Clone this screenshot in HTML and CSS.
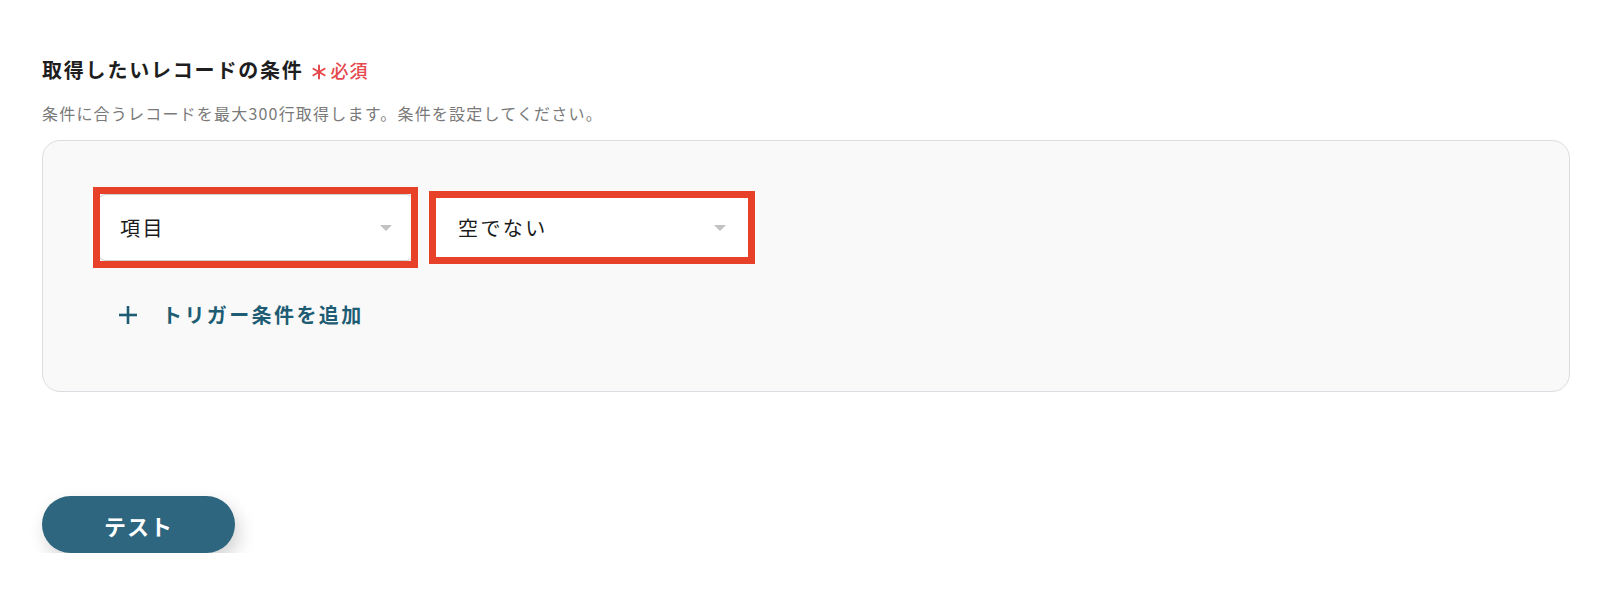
FILE: index.html
```html
<!DOCTYPE html>
<html lang="ja">
<head>
<meta charset="utf-8">
<title>条件</title>
<link rel="stylesheet" href="styles.css">
</head>
<body>
<div class="page">
  <div class="label-row">
    <span class="label">取得したいレコードの条件</span>
    <svg class="req-star" width="16" height="16" viewBox="0 0 16 16" aria-hidden="true">
      <g stroke="#e5484d" stroke-width="2" stroke-linecap="round">
        <line x1="8" y1="1.5" x2="8" y2="14.5"/>
        <line x1="2.4" y1="4.75" x2="13.6" y2="11.25"/>
        <line x1="2.4" y1="11.25" x2="13.6" y2="4.75"/>
      </g>
    </svg>
    <span class="req">必須</span>
  </div>
  <p class="hint">条件に合うレコードを最大300行取得します。条件を設定してください。</p>

  <div class="panel">
    <div class="cond-row">
      <div class="select hl hl-a">
        <span class="select-text">項目</span>
        <span class="caret"></span>
      </div>
      <div class="select select-focus hl hl-b">
        <span class="select-text">空でない</span>
        <span class="caret"></span>
      </div>
    </div>
    <div class="add-row">
      <svg class="plus" width="20" height="20" viewBox="0 0 20 20" aria-hidden="true">
        <g stroke="#1d5c73" stroke-width="2.6">
          <line x1="10" y1="1" x2="10" y2="19"/>
          <line x1="1" y1="10" x2="19" y2="10"/>
        </g>
      </svg>
      <span class="add-text">トリガー条件を追加</span>
    </div>
  </div>

  <button class="test-btn">テスト</button>
</div>
</body>
</html>
```

FILE: styles.css
```css
html, body {
  margin: 0;
  padding: 0;
  background: #ffffff;
}

body {
  font-family: "Noto Sans CJK JP", "Noto Sans", sans-serif;
  color: #222222;
}

.page {
  padding: 56px 30px 0 42px;
}

.label-row {
  display: flex;
  align-items: center;
  height: 28px;
}

.label {
  font-size: 20px;
  font-weight: 700;
  letter-spacing: 1.8px;
  line-height: 28px;
  color: #1e1e1e;
}

.req-star {
  margin-left: 7px;
  margin-top: 3px;
}

.req {
  margin-left: 4px;
  font-size: 18px;
  font-weight: 500;
  letter-spacing: 1px;
  color: #e5484d;
  line-height: 28px;
}

.hint {
  margin: 17px 0 15px;
  font-size: 16px;
  line-height: 24px;
  letter-spacing: 1.2px;
  color: #7a7a7a;
}

.panel {
  width: 1528px;
  box-sizing: border-box;
  border: 1px solid #dcdde2;
  border-radius: 18px;
  background: #f9f9f9;
  padding: 53px 0 61px 54px;
}

.cond-row {
  display: flex;
  gap: 17px;
}

.select {
  position: relative;
  box-sizing: border-box;
  width: 318px;
  height: 67px;
  background: #ffffff;
  border: 1px solid #cfcfcf;
  border-radius: 9px;
  display: flex;
  align-items: center;
  padding: 0 22px;
}

.select-focus {
  width: 320px;
  border: 2px solid #1d4ed8;
  padding-left: 24px;
  padding-right: 24px;
}

.select-text {
  flex: 1;
  font-size: 20px;
  letter-spacing: 2.4px;
  color: #1a1a1a;
  line-height: 28px;
}

.caret {
  width: 0;
  height: 0;
  border-left: 6px solid transparent;
  border-right: 6px solid transparent;
  border-top: 6px solid #c2c2c2;
}

/* red annotation frames lying over the selects */
.hl::after {
  content: "";
  position: absolute;
  border: 7.5px solid #e8412a;
  pointer-events: none;
}

.hl-a::after {
  top: -8px;
  left: -5px;
  right: -4px;
  bottom: -8px;
}

.hl-b::after {
  top: -5px;
  left: -5px;
  right: -5px;
  bottom: -5px;
}

.add-row {
  display: flex;
  align-items: center;
  gap: 24px;
  margin-top: 39px;
  padding-left: 21px;
  height: 30px;
}

.add-text {
  font-size: 20px;
  font-weight: 700;
  letter-spacing: 2.4px;
  color: #1d5c73;
  line-height: 28px;
}

.test-btn {
  margin-top: 104px;
  width: 193px;
  height: 57px;
  border: none;
  border-radius: 29px;
  background: #2e6680;
  color: #ffffff;
  font-family: "Noto Sans CJK JP", "Noto Sans", sans-serif;
  font-size: 22px;
  font-weight: 700;
  letter-spacing: 1px;
  box-shadow: 4px 8px 18px rgba(0, 0, 0, 0.18);
  padding: 0;
  cursor: pointer;
}
```
